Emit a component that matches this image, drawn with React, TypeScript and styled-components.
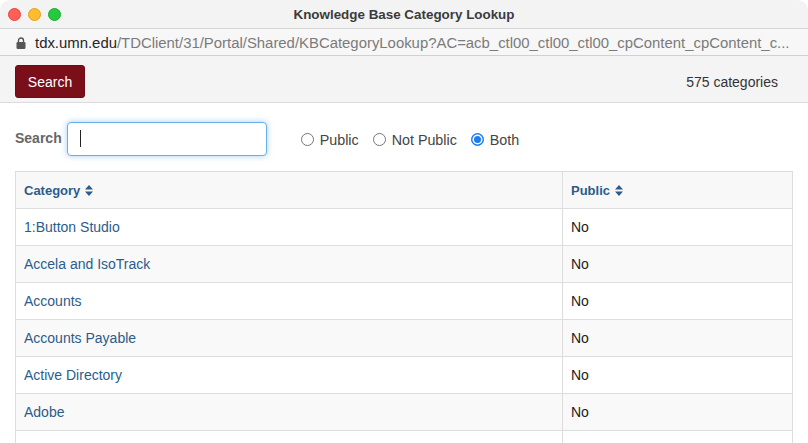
import React from "react";
import styled, { createGlobalStyle } from "styled-components";

const Global = createGlobalStyle`
  html, body { margin: 0; padding: 0; background: #ffffff; }
  body { font-family: "Liberation Sans", Arial, Helvetica, sans-serif; }
  * { box-sizing: border-box; }
`;

const Window = styled.div`
  width: 808px;
  height: 443px;
  overflow: hidden;
  border-top-left-radius: 10px;
  border-top-right-radius: 10px;
  background: #fff;
  display: flex;
  flex-direction: column;
`;

const TitleBar = styled.div`
  height: 29px;
  flex: none;
  background: #f3f3f3;
  border-bottom: 1px solid #d6d6d6;
  display: grid;
  grid-template-columns: 80px 1fr 80px;
  align-items: center;
`;

const Lights = styled.div`
  display: flex;
  gap: 7px;
  padding-left: 8px;
`;

const Light = styled.span<{ $c: string; $b: string }>`
  width: 13px;
  height: 13px;
  border-radius: 50%;
  background: ${(p) => p.$c};
  border: 0.5px solid ${(p) => p.$b};
`;

const Title = styled.div`
  text-align: center;
  font-size: 13.4px;
  font-weight: bold;
  color: #3b3b3b;
`;

const UrlBar = styled.div`
  height: 27px;
  flex: none;
  background: #f7f7f7;
  border-bottom: 1px solid #d0d0d0;
  display: flex;
  align-items: center;
  gap: 9px;
  padding-left: 16px;
  padding-top: 1px;
  font-size: 14.9px;
  color: #7b7b7b;
  white-space: nowrap;
`;

const Host = styled.span`
  color: #262626;
`;

const Toolbar = styled.div`
  height: 47px;
  flex: none;
  background: #f4f4f4;
  border-bottom: 1px solid #dcdcdc;
  display: flex;
  align-items: center;
  justify-content: space-between;
  padding: 5px 30px 0 15px;
`;

const PrimaryButton = styled.button`
  width: 70px;
  height: 33px;
  background: #7a0f1a;
  color: #fff;
  border: 1px solid #6c0d16;
  border-radius: 3px;
  font-family: inherit;
  font-size: 14px;
  padding: 0;
`;

const Count = styled.span`
  font-size: 14px;
  color: #333;
`;

const Content = styled.div`
  padding: 18px 15px 0 15px;
  display: flex;
  flex-direction: column;
  gap: 15px;
`;

const FilterRow = styled.div`
  display: flex;
  align-items: center;
  height: 35px;
`;

const Label = styled.span`
  font-size: 14px;
  font-weight: bold;
  color: #666;
  margin-right: 5px;
  margin-top: -2px;
`;

const FakeInput = styled.div`
  width: 200px;
  height: 34px;
  border: 1px solid #66afe9;
  border-radius: 4px;
  box-shadow: 0 0 6px rgba(102, 175, 233, 0.6);
  display: flex;
  align-items: center;
  padding-left: 12px;
  background: #fff;
`;

const Caret = styled.span`
  width: 1px;
  height: 17px;
  background: #222;
`;

const Radios = styled.div`
  display: flex;
  align-items: center;
  gap: 14px;
  margin-left: 34px;
  margin-top: 2px;
`;

const RadioLabel = styled.label`
  display: flex;
  align-items: center;
  gap: 6px;
  font-size: 14.3px;
  color: #444;
`;

const RadioDot = styled.span<{ $on?: boolean }>`
  width: 13px;
  height: 13px;
  border-radius: 50%;
  border: ${(p) => (p.$on ? "1px solid #1a7df0" : "1px solid #777")};
  background: ${(p) => (p.$on ? "#1a7df0" : "#fff")};
  display: flex;
  align-items: center;
  justify-content: center;
  &::after {
    content: "";
    width: 7px;
    height: 7px;
    border-radius: 50%;
    background: ${(p) => (p.$on ? "#1a7df0" : "transparent")};
    box-shadow: ${(p) => (p.$on ? "0 0 0 1.5px #fff" : "none")};
  }
`;

const Table = styled.table`
  width: 778px;
  border-collapse: collapse;
  font-size: 14px;
`;

const Th = styled.th<{ $w?: number }>`
  text-align: left;
  height: 37px;
  padding: 0 8px;
  background: #f8f8f8;
  border: 1px solid #dddddd;
  color: #2b5c8c;
  font-size: 13px;
  font-weight: bold;
  width: ${(p) => (p.$w ? `${p.$w}px` : "auto")};
`;

const Tr = styled.tr<{ $alt: boolean }>`
  background: ${(p) => (p.$alt ? "#f9f9f9" : "#ffffff")};
`;

const Td = styled.td`
  height: 37px;
  padding: 0 8px;
  border: 1px solid #dddddd;
  color: #222;
`;

const Link = styled.a`
  color: #2b5c8c;
  text-decoration: none;
`;

const SortIcon = () => (
  <svg width="8" height="11" viewBox="0 0 8 11" style={{ marginLeft: 5, verticalAlign: "-1px" }}>
    <path d="M4 0 L8 4.5 H0 Z M0 6.5 H8 L4 11 Z" fill="#2b5c8c" />
  </svg>
);

const Lock = () => (
  <svg width="10" height="12" viewBox="0 0 10 12">
    <path d="M2.5 5V3.5a2.5 2.5 0 0 1 5 0V5" fill="none" stroke="#555" strokeWidth="1.4" />
    <rect x="0.5" y="5" width="9" height="7" rx="1.3" fill="#555" />
  </svg>
);

const rows = [
  "1:Button Studio",
  "Accela and IsoTrack",
  "Accounts",
  "Accounts Payable",
  "Active Directory",
  "Adobe",
];

export default function App() {
  return (
    <>
      <Global />
      <Window>
        <TitleBar>
          <Lights>
            <Light $c="#fe5f57" $b="#e2463f" />
            <Light $c="#febc2e" $b="#e1a116" />
            <Light $c="#28c840" $b="#14ae2c" />
          </Lights>
          <Title>Knowledge Base Category Lookup</Title>
          <span />
        </TitleBar>
        <UrlBar>
          <Lock />
          <span>
            <Host>tdx.umn.edu</Host>
            /TDClient/31/Portal/Shared/KBCategoryLookup?AC=acb_ctl00_ctl00_ctl00_cpContent_cpContent_c...
          </span>
        </UrlBar>
        <Toolbar>
          <PrimaryButton>Search</PrimaryButton>
          <Count>575 categories</Count>
        </Toolbar>
        <Content>
          <FilterRow>
            <Label>Search</Label>
            <FakeInput>
              <Caret />
            </FakeInput>
            <Radios>
              <RadioLabel>
                <RadioDot />
                Public
              </RadioLabel>
              <RadioLabel>
                <RadioDot />
                Not Public
              </RadioLabel>
              <RadioLabel>
                <RadioDot $on />
                Both
              </RadioLabel>
            </Radios>
          </FilterRow>
          <Table>
            <thead>
              <tr>
                <Th $w={547}>
                  Category
                  <SortIcon />
                </Th>
                <Th>
                  Public
                  <SortIcon />
                </Th>
              </tr>
            </thead>
            <tbody>
              {rows.map((r, i) => (
                <Tr key={r} $alt={i % 2 === 1}>
                  <Td>
                    <Link href="#">{r}</Link>
                  </Td>
                  <Td>No</Td>
                </Tr>
              ))}
              <Tr $alt={false}>
                <Td />
                <Td />
              </Tr>
            </tbody>
          </Table>
        </Content>
      </Window>
    </>
  );
}
